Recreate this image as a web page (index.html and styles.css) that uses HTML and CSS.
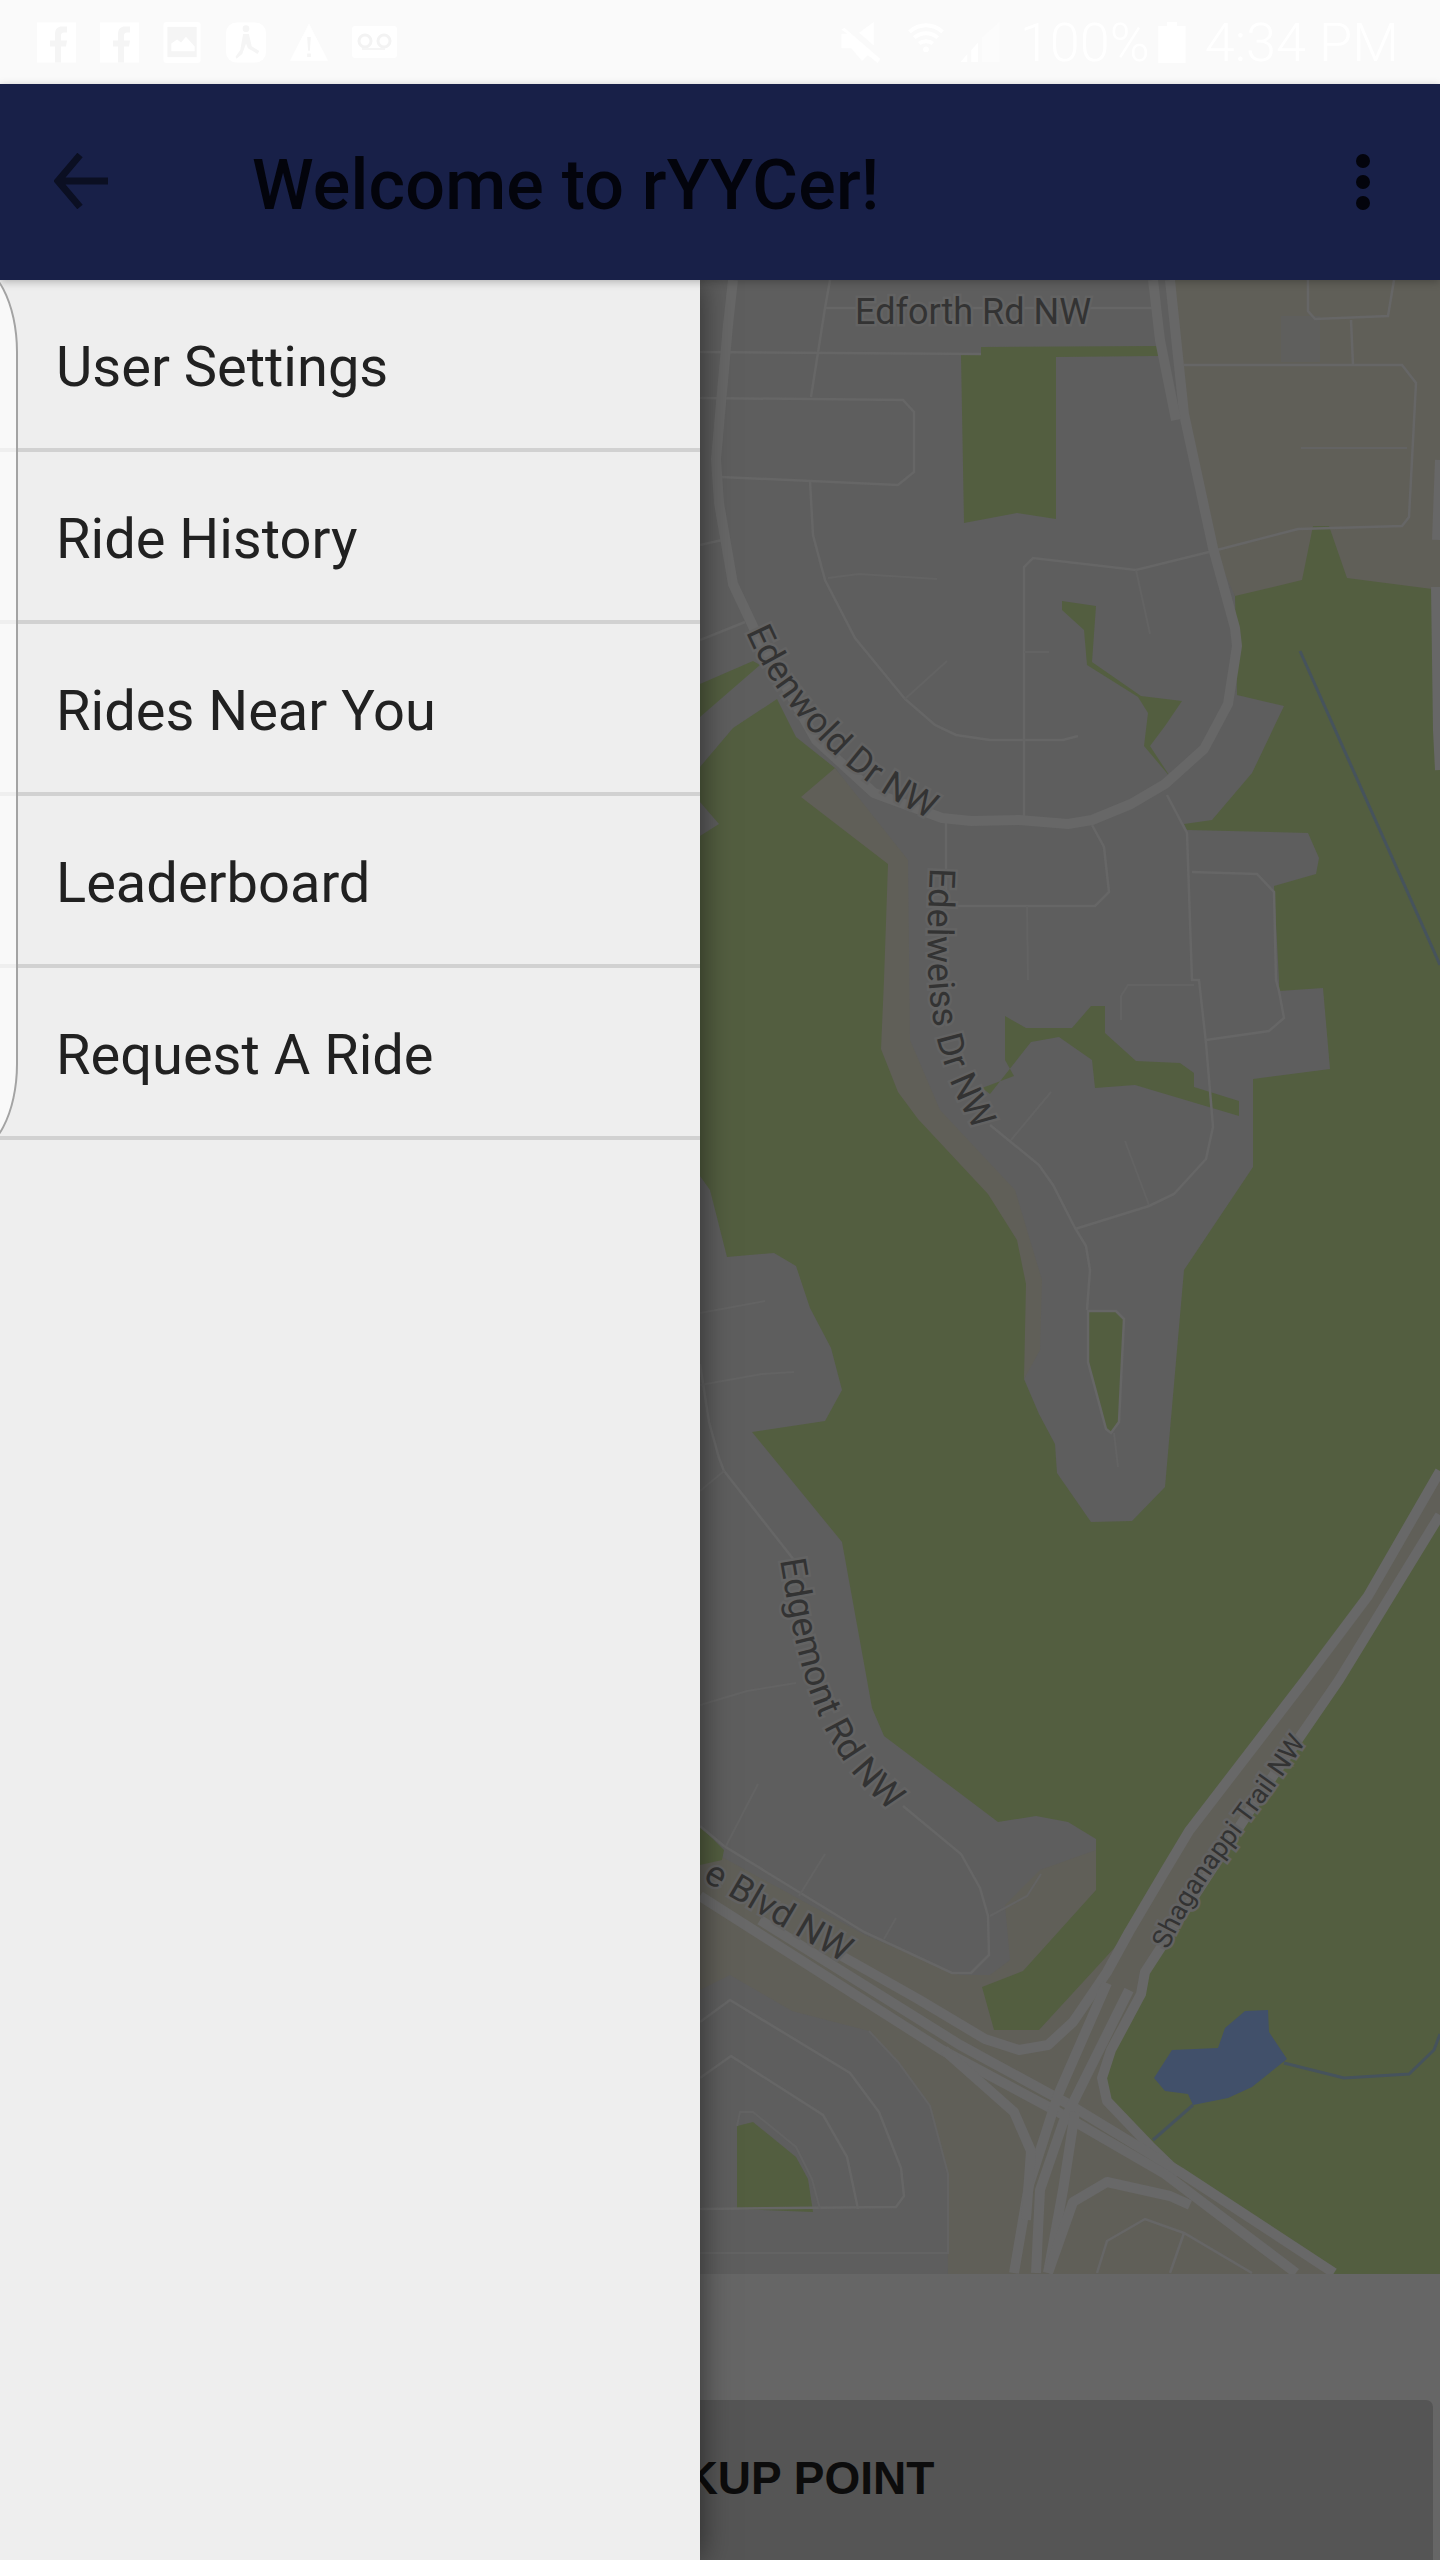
FILE: index.html
```html
<!DOCTYPE html>
<html lang="en">
<head>
    <meta charset="UTF-8">
    <meta name="viewport" content="width=device-width, initial-scale=1.0">
    <title>Welcome to rYYCer!</title>
    <link rel="stylesheet" href="styles.css">
</head>
<body>
    <div class="status-bar">
        <div class="status-left">
            <svg class="st-icon" viewBox="0 0 40 40"><path class="st-w" d="M0 0h39v40H0z"/><path class="st-g" d="M18 40V24h-5v-6h5v-6c0-6 3-8 7-8h5v6h-3c-2 0-3 1-3 3v5h6l-1 6h-5v16z"/></svg>
            <svg class="st-icon" viewBox="0 0 40 40"><path class="st-w" d="M0 0h39v40H0z"/><path class="st-g" d="M18 40V24h-5v-6h5v-6c0-6 3-8 7-8h5v6h-3c-2 0-3 1-3 3v5h6l-1 6h-5v16z"/></svg>
            <svg class="st-icon" viewBox="0 0 40 42"><rect class="st-w" width="38" height="42" rx="3"/><rect class="st-g" x="4" y="5" width="30" height="31"/><path class="st-w" d="M8 30v-8l6-4 4 3 5-6 9 10v5z"/></svg>
            <svg class="st-icon" viewBox="0 0 42 42"><rect class="st-w" width="42" height="42" rx="11"/><path class="st-g" d="M21 3a3 3 0 1 1 0 7 3 3 0 0 1 0-7zm-3 9h6l3 13 8 5-2 3-10-6-2-5-4 11-6 5-1-2 5-7z"/></svg>
            <svg class="st-icon" viewBox="0 0 44 42"><path class="st-w" d="M22 0l21 41H1z"/><path class="st-g" d="M20 15h4l-1 15h-2zM20 33h4v4h-4z"/></svg>
            <svg class="st-icon st-wide" viewBox="0 0 45 32"><rect class="st-w" width="45" height="32" rx="3"/><circle class="st-g-line" cx="13" cy="15" r="6"/><circle class="st-g-line" cx="32" cy="15" r="6"/><path class="st-g" d="M10 22h23v2H10z"/></svg>
        </div>
        <div class="status-right">
            <svg class="st-icon mute" viewBox="0 0 40 42"><path class="st-w" d="M18 11L33 0v24zM3 6l37 32-3 4-10-8-6 6-11-13H0V12h6L0 8z"/></svg>
            <svg class="st-icon wifi" viewBox="0 0 38 42"><path class="st-wifi" d="M2 10c10-9 24-9 34 0M7 16c7-6 17-6 24 0M12 22c4-3 10-3 14 0"/><circle class="st-w" cx="19" cy="28" r="3"/></svg>
            <svg class="st-icon signal" viewBox="0 0 40 42"><path class="st-w" d="M0 41L7 33v8zM11 29l7-8v20h-7z"/><path class="st-faint" d="M22 16l18-16v41H22z"/></svg>
            <span class="st-text">100%</span>
            <svg class="st-icon battery" viewBox="0 0 28 42"><path class="st-w" d="M9 0h10v4h9v38H0V4h9z"/></svg>
            <span class="st-text st-time">4:34 PM</span>
        </div>
    </div>

    <div class="app-bar">
        <svg class="back-icon" viewBox="0 0 56 56"><path d="M54 28H4M26 2L4 28l22 26"/></svg>
        <h1 class="app-title">Welcome to rYYCer!</h1>
        <div class="more-icon"><span></span><span></span><span></span></div>
    </div>

    <div class="content">
        <div class="map">
            <svg class="map-svg" viewBox="700 280 740 1994">
                <rect class="green" x="700" y="280" width="740" height="1994"/>

                <!-- land -->
                <polygon class="beige" points="1170,280 1440,280 1440,590 1347,578 1329,526 1313,526 1302,580 1235,596 1170,500"/>
                <polygon class="bluish" points="1281,316 1320,316 1320,362 1281,362"/>
                <polygon class="beige" points="700,1826 1096,1839 1096,1890 1023,1971 982,1987 994,2030 1039,2030 1129,1932 1165,1871 1189,1831 1305,1680 1368,1596 1440,1471 1440,1515 1339,1680 1262,1792 1145,1972 1141,1994 1111,2050 1102,2078 1107,2101 1150,2146 1179,2174 1334,2274 700,2274"/>
                <polygon class="beige" points="835,768 801,797 888,864 884,980 881,1049 898,1092 918,1119 988,1194 1017,1240 1026,1284 1024,1379 1045,1350 1050,1280 1020,1185 945,1105 915,1040 915,860"/>
                <polygon class="land" points="700,280 1170,280 1184,414 1213,548 1235,596 1237,695 1284,706 1252,773 1212,820 1184,824 1187,830 1308,833 1319,858 1316,874 1274,886 1279,980 1279,991 1323,988 1330,1069 1253,1079 1253,1167 1184,1270 1165,1487 1132,1521 1091,1522 1057,1473 1055,1444 1039,1414 1024,1379 1040,1350 1042,1280 1015,1190 940,1110 910,1040 908,860 835,768 796,737 777,699 733,728 700,767"/>
                <polygon class="land" points="700,802 719,824 700,836"/>
                <polygon class="land" points="700,1176 710,1190 727,1257 774,1253 796,1266 810,1308 831,1348 842,1390 825,1421 752,1432 842,1542 867,1680 872,1708 884,1736 998,1822 1036,1816 1068,1822 1096,1839 1096,1850 1040,1870 1005,1905 1010,1960 990,1975 960,1975 865,1935 700,1845"/>
                <polygon class="land" points="700,1990 730,1975 792,2011 869,2031 898,2062 930,2106 947,2174 948,2274 700,2274"/>

                <!-- parks and water on the land -->
                <polygon class="green" points="961,355 981,354 981,347 1158,346 1158,356 1056,357 1056,519 1017,513 964,523"/>
                <polygon class="green" points="1062,601 1096,606 1092,662 1141,696 1182,701 1165,726 1150,746 1171,778 1144,746 1148,713 1138,697 1087,665 1084,630 1062,610"/>
                <polygon class="green" points="700,684 753,661 760,665 700,717"/>
                <polygon class="green" points="1005,1016 1026,1028 1072,1028 1091,1006 1105,1006 1105,1033 1136,1061 1180,1063 1194,1073 1194,1087 1239,1101 1239,1116 1135,1085 1095,1088 1092,1060 1059,1037 1031,1042 990,1094 982,1088 1014,1076 1005,1060"/>
                <polygon class="green" points="1088,1311 1116,1311 1124,1319 1119,1422 1111,1433 1106,1429 1088,1362"/>
                <polygon class="green" points="700,1826 724,1850 722,1860 700,1865"/>
                <polygon class="green" points="737,2126 753,2122 796,2157 808,2179 813,2212 737,2209"/>
                <polygon class="water" points="1154,2078 1172,2050 1218,2048 1225,2028 1245,2011 1268,2010 1269,2032 1287,2059 1252,2087 1228,2098 1193,2105 1188,2094 1165,2091"/>
                <polyline class="stream" points="1193,2105 1153,2140"/>
                <polyline class="stream" points="1284,2063 1344,2078 1409,2074 1434,2050 1440,2034"/>
                <polyline class="stream" points="1300,651 1440,965"/>

                <!-- small streets -->
                <g class="street">
                    <polyline points="825,308 1153,308"/>
                    <polyline points="830,280 825,308 811,397"/>
                    <polyline points="700,352 981,354"/>
                    <polyline points="700,398 903,400 914,412 914,472 898,485 721,477"/>
                    <polyline points="810,481 813,535 825,580 855,638 905,699 935,725 956,735 990,740 1063,740 1078,736"/>
                    <polyline class="faint" points="828,578 859,574 937,579"/>
                    <polyline class="faint" points="947,661 905,699"/>
                    <polyline points="1024,818 1024,567 1033,558 1136,570 1213,551 1298,529 1402,526 1409,517 1416,383 1402,365 1184,365"/>
                    <polyline class="faint" points="1136,570 1150,634"/>
                    <polyline class="faint" points="1024,652 1049,652"/>
                    <polyline class="faint" points="1301,448 1407,448"/>
                    <polyline points="1351,320 1353,365"/>
                    <polyline points="1308,280 1308,311 1315,319 1388,316 1394,280"/>
                    <polyline points="700,545 722,540"/>
                    <polyline points="700,640 745,622"/>
                    <polyline points="1167,795 1187,833 1192,980 1199,980 1206,1043 1213,1127 1206,1159 1174,1194 1149,1206 1075,1229"/>
                    <polyline points="1192,872 1257,874 1274,892 1276,980 1279,991 1284,1018 1269,1031 1206,1040"/>
                    <polyline points="1092,825 1104,847 1109,892 1095,906 946,906"/>
                    <polyline points="946,820 946,906"/>
                    <polyline class="faint" points="1027,906 1028,980"/>
                    <polyline points="990,1125 1039,1165 1053,1185 1075,1228 1086,1246 1090,1270 1087,1310"/>
                    <polyline class="faint" points="1011,1140 1051,1092"/>
                    <polyline class="faint" points="1125,1141 1149,1205"/>
                    <polyline class="faint" points="1121,1020 1121,996 1128,985 1194,985"/>
                    <polyline class="faint" points="1114,1433 1118,1467"/>
                    <polygon points="1088,1311 1116,1311 1124,1319 1119,1422 1111,1433 1106,1429 1088,1362"/>
                    <polyline points="700,1364 709,1422 719,1458 724,1471 794,1560"/>
                    <polyline points="903,1806 961,1854 980,1888 988,1916 989,1955 971,1973 952,1973 864,1932 724,1846 700,1826"/>
                    <polyline class="faint" points="700,1313 765,1301"/>
                    <polyline class="faint" points="700,1385 762,1374 794,1372"/>
                    <polyline class="faint" points="700,1491 724,1471"/>
                    <polyline class="faint" points="700,1705 747,1691 796,1683"/>
                    <polyline class="faint" points="758,1784 726,1846"/>
                    <polyline class="faint" points="825,1854 799,1896"/>
                    <polyline class="faint" points="896,1918 884,1939"/>
                    <polyline class="faint" points="1041,1874 1027,1896 990,1916"/>
                    <polyline points="700,2022 730,2000 850,2073 879,2112 901,2168 904,2196 896,2207 700,2209"/>
                    <polyline points="700,2078 731,2056 823,2115 847,2157 858,2209"/>
                    <polyline class="faint" points="737,2126 740,2112 753,2112 796,2147 812,2179 820,2209"/>
                    <polyline class="faint" points="700,2253 948,2253 948,2174 930,2106 898,2062 869,2031"/>
                    <polyline points="1097,2273 1107,2241 1145,2219 1184,2233 1252,2273"/>
                    <polyline points="1170,2273 1184,2233"/>
                </g>

                <!-- main roads -->
                <g class="road">
                    <polyline points="1170,280 1184,414 1213,548 1235,628 1237,646 1228,704 1204,749 1165,784 1131,804 1092,820 1068,824 1019,820 971,821 942,818 874,793 816,740 758,637 733,584 719,503 716,459 728,325 733,280"/>
                    <polyline points="1153,280 1160,340 1176,420"/>
                    <polyline points="1436,587 1438,730 1440,770"/>
                    <polyline points="1437,540 1440,460"/>
                </g>
                <g class="highway">
                    <polyline points="840,1955 918,1999 985,2039 1019,2050 1048,2045 1073,2022 1107,1972 1129,1932 1165,1871 1189,1831 1305,1680 1368,1596 1440,1471"/>
                    <polyline points="1440,1515 1339,1680 1262,1792 1145,1972 1141,1994 1111,2050 1102,2078 1107,2101 1150,2146 1179,2174"/>
                    <polyline points="700,1896 942,2050 1058,2112 1165,2174 1296,2273"/>
                    <polyline points="760,1920 960,2045 1070,2105 1180,2172 1334,2273"/>
                    <polyline points="1014,2273 1029,2185 1058,2095 1107,1983"/>
                    <polyline points="1036,2273 1040,2190 1063,2123 1129,1990"/>
                    <polyline points="1048,2273 1063,2190 1075,2112"/>
                    <polyline points="944,2050 1014,2112 1031,2151 1026,2220"/>
                    <polyline points="1048,2273 1073,2202 1107,2182 1170,2196 1190,2205"/>
                </g>

                <!-- labels -->
                <path id="lbl-edenwold" class="label-path" d="M746 632 C 775 700 850 796 968 834"/>
                <path id="lbl-edelweiss" class="label-path" d="M930 868 C 927 950 917 1040 978 1135"/>
                <path id="lbl-edgemont" class="label-path" d="M780 1560 C 800 1680 820 1760 900 1818"/>
                <path id="lbl-blvd" class="label-path" d="M702 1880 L 842 1962"/>
                <path id="lbl-shag" class="label-path" d="M1168 1950 C 1198 1880 1248 1830 1304 1745"/>
                <text class="map-label" x="855" y="324">Edforth Rd NW</text>
                <text class="map-label"><textPath href="#lbl-edenwold">Edenwold Dr NW</textPath></text>
                <text class="map-label"><textPath href="#lbl-edelweiss">Edelweiss Dr NW</textPath></text>
                <text class="map-label"><textPath href="#lbl-edgemont">Edgemont Rd NW</textPath></text>
                <text class="map-label"><textPath href="#lbl-blvd">e Blvd NW</textPath></text>
                <text class="map-label map-label-sm"><textPath href="#lbl-shag">Shaganappi Trail NW</textPath></text>
            </svg>
        </div>
        <div class="bottom-panel">
            <button class="pickup-btn">SET PICKUP POINT</button>
        </div>

        <div class="drawer">
            <div class="drawer-item">User Settings</div>
            <div class="drawer-item">Ride History</div>
            <div class="drawer-item">Rides Near You</div>
            <div class="drawer-item">Leaderboard</div>
            <div class="drawer-item">Request A Ride</div>
        </div>
    </div>

    <div class="edge-panel"></div>
</body>
</html>
```

FILE: styles.css
```css
body {
    font-family: Roboto, 'Liberation Sans', sans-serif;
    margin: 0;
    padding: 0;
    background-color: #666;
    overflow: hidden;
}

/* status bar */
.status-bar {
    height: 84px;
    background-color: #fafafa;
    display: flex;
    align-items: center;
    justify-content: space-between;
    padding: 0 41px 0 37px;
}

.status-left {
    display: flex;
    align-items: center;
    gap: 23px;
}

.status-right {
    display: flex;
    align-items: center;
}

.st-icon {
    width: 40px;
    height: 41px;
    display: block;
}

.st-wide {
    width: 45px;
    height: 32px;
}

.st-w { fill: #fff; }
.st-g { fill: #f5f5f5; }
.st-g-line { fill: none; stroke: #f3f3f3; stroke-width: 3; }
.st-faint { fill: #fcfcfc; }
.st-wifi { fill: none; stroke: #fff; stroke-width: 4; }

.mute { margin-right: 26px; }
.wifi { margin-right: 15px; width: 38px; }
.signal { margin-right: 20px; }
.battery { width: 28px; margin: 0 19px 0 8px; }

.st-text {
    font-size: 54px;
    font-weight: 300;
    line-height: 41px;
    color: #fff;
}

/* app bar */
.app-bar {
    height: 196px;
    background-color: #182048;
    display: flex;
    align-items: center;
    position: relative;
    z-index: 2;
    padding: 0 0 0 54px;
    box-shadow: 0 2px 8px rgba(0, 0, 0, 0.25);
}

.back-icon {
    width: 56px;
    height: 56px;
    margin-top: -3px;
    fill: none;
    stroke: #0b0f22;
    stroke-width: 7;
}

.app-title {
    margin: 6px 0 0 142px;
    font-size: 70px;
    font-weight: 500;
    letter-spacing: 0.2px;
    color: #03040c;
    flex: 1;
}

.more-icon {
    display: flex;
    flex-direction: column;
    gap: 7px;
    margin: 0 70px 0 0;
}

.more-icon span {
    display: block;
    width: 14px;
    height: 14px;
    border-radius: 50%;
    background-color: #03040c;
}

/* main part under the bar */
.content {
    position: relative;
    height: 2280px;
}

.map {
    height: 1994px;
    overflow: hidden;
}

.map-svg {
    display: block;
    width: 740px;
    height: 1994px;
    margin-left: 700px;
}

.green { fill: #535e40; }
.beige { fill: #605f58; }
.land { fill: #5e5e5e; }
.bluish { fill: #5f5f5d; }
.water { fill: #41506a; }
.stream { fill: none; stroke: #46535c; stroke-width: 3; }
.street polyline, .street polygon { fill: none; stroke: #666; stroke-width: 2.5; }
.street .faint { stroke: #636363; stroke-width: 2; }
.road polyline { fill: none; stroke: #676767; stroke-width: 10; stroke-linejoin: round; }
.highway polyline { fill: none; stroke: #686868; stroke-width: 10; stroke-linejoin: round; }
.label-path { fill: none; stroke: none; }

.map-label {
    font-size: 36px;
    fill: #333;
    stroke: #636363;
    stroke-width: 5px;
    paint-order: stroke;
}

.map-label-sm {
    font-size: 27px;
}

.bottom-panel {
    height: 286px;
    box-sizing: border-box;
    padding: 126px 7px 0;
}

.pickup-btn {
    display: block;
    width: 100%;
    height: 160px;
    border: none;
    border-radius: 7px 7px 0 0;
    background-color: #555;
    color: #0c0c0c;
    font-family: 'Liberation Sans', sans-serif;
    font-size: 46px;
    font-weight: 700;
    padding: 0 0 4px;
}

/* drawer */
.drawer {
    position: absolute;
    top: 0;
    left: 0;
    bottom: 0;
    width: 700px;
    background-color: #eee;
    box-shadow: 0 0 30px rgba(0, 0, 0, 0.55);
}

.drawer-item {
    padding: 6px 0 0 56px;
    height: 162px;
    display: flex;
    align-items: center;
    font-size: 56px;
    color: #212121;
    border-bottom: 4px solid #d1d1d1;
}

.edge-panel {
    position: absolute;
    z-index: 3;
    top: 262px;
    left: -48px;
    width: 62px;
    height: 888px;
    border: 2px solid #a3a3a3;
    border-radius: 0 48px 48px 0 / 0 90px 90px 0;
    background-color: rgba(255, 255, 255, 0.65);
}
```
